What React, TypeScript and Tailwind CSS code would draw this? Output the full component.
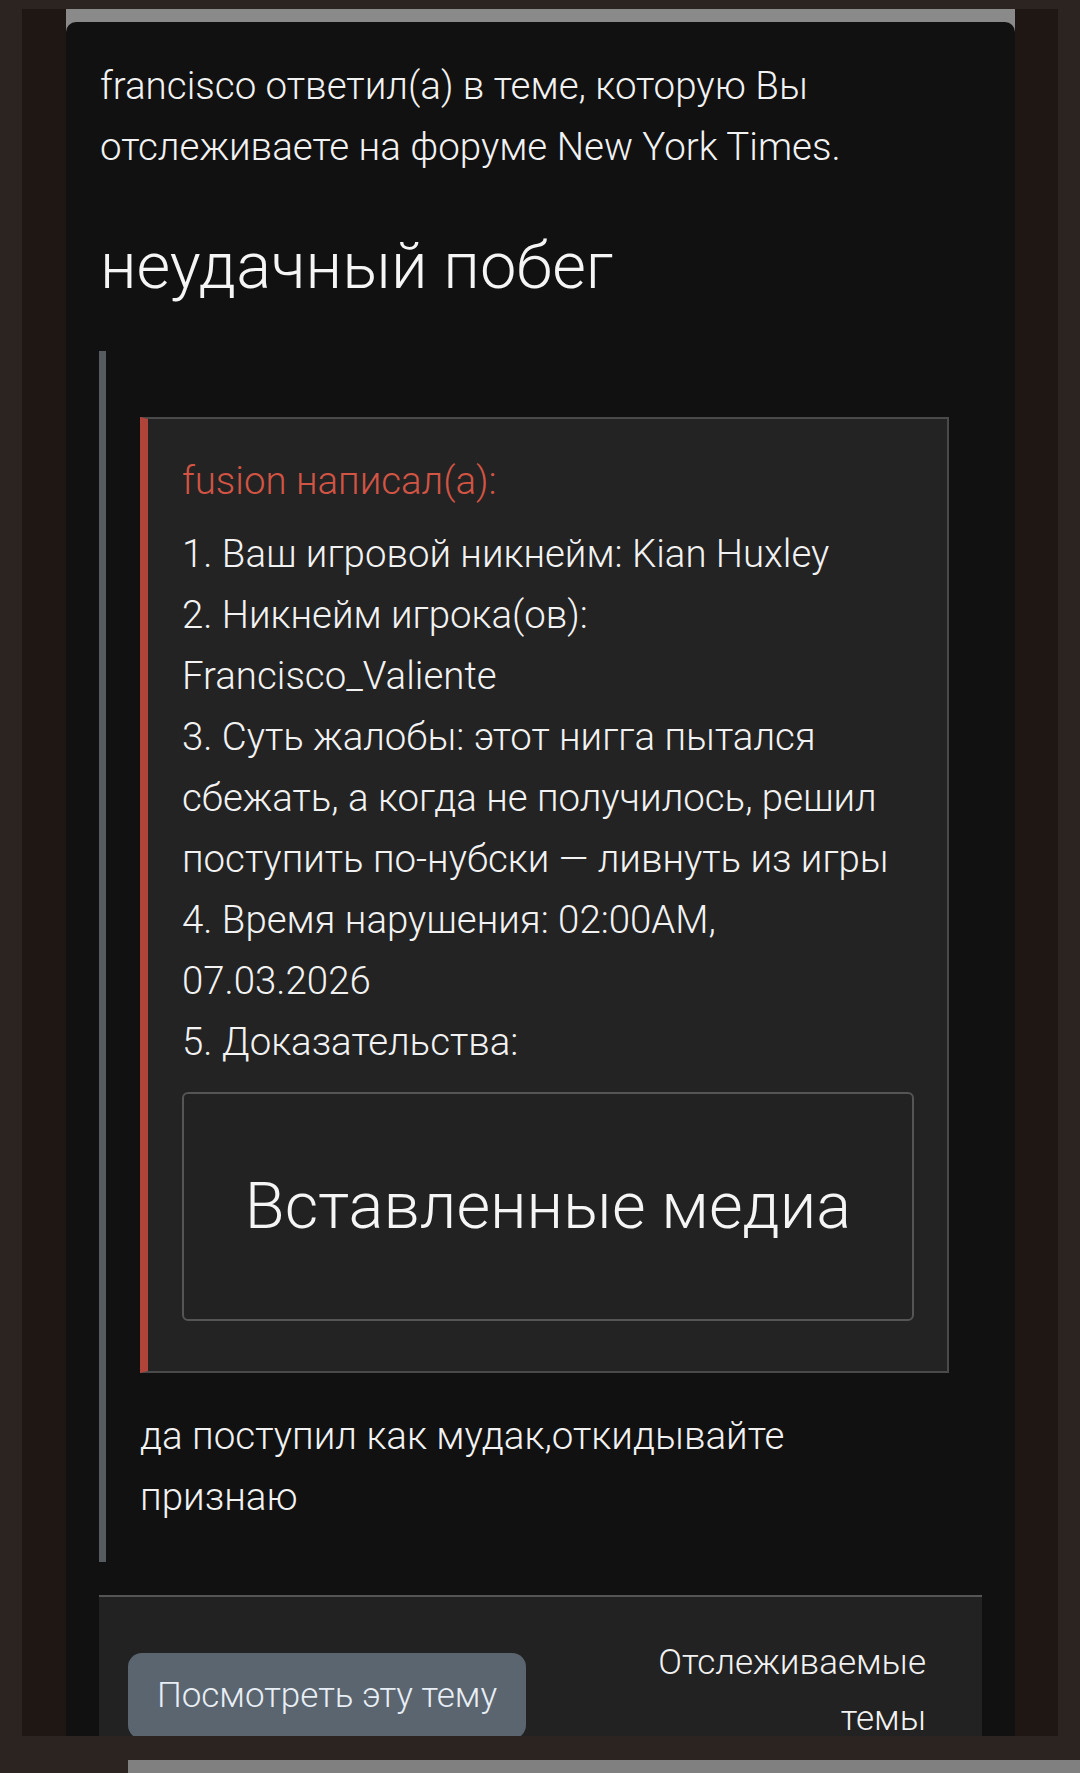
import React from "react";

const font = { fontFamily: "Roboto, 'Noto Sans', sans-serif" };

const QuoteLines = [
  "1. Ваш игровой никнейм: Kian Huxley",
  "2. Никнейм игрока(ов):",
  "Francisco_Valiente",
  "3. Суть жалобы: этот нигга пытался",
  "сбежать, а когда не получилось, решил",
  "поступить по-нубски — ливнуть из игры",
  "4. Время нарушения: 02:00AM,",
  "07.03.2026",
  "5. Доказательства:",
];

const Quote = () => (
  <div className="ml-[34px] mr-[33px] border-2 border-l-[8px] border-[#4a4a4a] border-l-[#b0443a] bg-[#232323] pl-[34px] pr-[33px] pt-[31px] pb-[50px]">
    <div className="text-[38.4px] leading-[61px] text-[#d25444]">fusion написал(а):</div>
    <div className="mt-[12px] text-[38.4px] leading-[61px] text-[#f2f2f2]">
      {QuoteLines.map((line) => (
        <div key={line}>{line}</div>
      ))}
    </div>
    <div className="mt-[20px] flex h-[229px] items-center justify-center rounded-[6px] border-2 border-[#555] bg-[#222]">
      <span className="text-[65px] text-[#f5f5f5]">Вставленные медиа</span>
    </div>
  </div>
);

const Footer = () => (
  <div className="mt-[33px] flex h-[200px] items-start justify-between border-t-2 border-[#555] bg-[#222] pl-[29px] pr-[56px] pt-[56px]">
    <button className="flex h-[86px] w-[398px] items-center justify-center rounded-[14px] bg-[#5b6570] text-[35px] font-light text-[#e8eef5]">
      Посмотреть эту тему
    </button>
    <div className="-mt-[18px] text-right text-[35px] leading-[56px] text-[#f2f2f2]">
      Отслеживаемые
      <br />
      темы
    </div>
  </div>
);

export default function App() {
  return (
    <div className="h-[1773px] w-[1080px] overflow-hidden bg-[#2b2421] font-light" style={font}>
      <div className="h-[9px]" />
      <div className="mx-[22px] h-[1727px] overflow-hidden bg-[#1e1713] pl-[44px] pr-[43px]">
        <div className="h-full bg-[#8a8a8a] pt-[13px]">
          <div className="h-full rounded-t-[10px] bg-[#111] pl-[33px] pr-[33px] pt-[33px]">
            <p className="pl-[1px] text-[38.5px] leading-[61px] text-[#f2f2f2]">
              francisco ответил(а) в теме, которую Вы
              <br />
              отслеживаете на форуме New York Times.
            </p>
            <h1 className="mt-[51px] pl-[1px] text-[65px] leading-[76px] text-[#f5f5f5]">неудачный побег</h1>
            <div className="mt-[47px] border-l-[7px] border-[#555b5e] pt-[66px] pb-[35px]">
              <Quote />
              <div className="ml-[34px] mt-[32px] text-[38.5px] leading-[61px] text-[#f2f2f2]">
                да поступил как мудак,откидывайте
                <br />
                признаю
              </div>
            </div>
            <Footer />
          </div>
        </div>
      </div>
      <div className="ml-[128px] mt-[24px] h-[13px] bg-[#808080]" />
    </div>
  );
}
